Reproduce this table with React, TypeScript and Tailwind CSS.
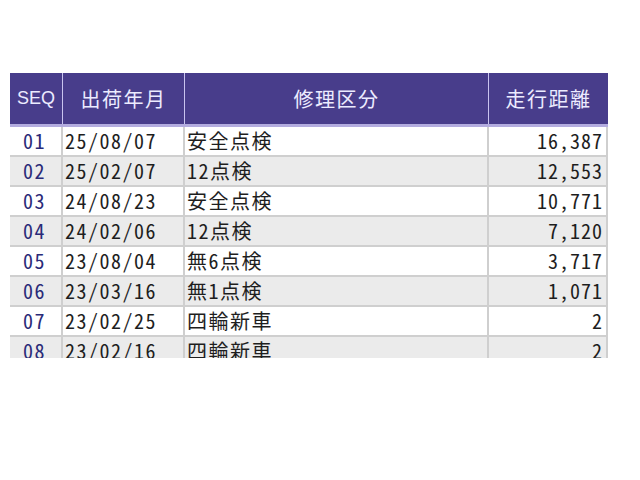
import React from 'react'

interface Row {
  seq: string
  date: string
  kind: string
  km: string
}

const rows: Row[] = [
  { seq: '01', date: '25/08/07', kind: '安全点検', km: '16,387' },
  { seq: '02', date: '25/02/07', kind: '12点検', km: '12,553' },
  { seq: '03', date: '24/08/23', kind: '安全点検', km: '10,771' },
  { seq: '04', date: '24/02/06', kind: '12点検', km: '7,120' },
  { seq: '05', date: '23/08/04', kind: '無6点検', km: '3,717' },
  { seq: '06', date: '23/03/16', kind: '無1点検', km: '1,071' },
  { seq: '07', date: '23/02/25', kind: '四輪新車', km: '2' },
  { seq: '08', date: '23/02/16', kind: '四輪新車', km: '2' },
]

const cols = 'grid grid-cols-[53px_122px_304px_119px]'
const font = 'font-["Noto_Sans_Mono_CJK_JP","Noto_Sans_CJK_JP",sans-serif]'

const App: React.FC = () => {
  return (
    <div className="w-[640px] h-[480px] bg-white pt-[73px] pl-[10px]">
      <div className={`w-[598px] h-[285px] overflow-hidden ${font}`}>
        {/* header */}
        <div className={`${cols} h-[54px] bg-[#483d8b] border-b-[3px] border-[#b3acdf] text-[#ecebff]`}>
          <div className="flex items-center justify-center border-r border-[#c9c4ef] font-['Liberation_Sans',sans-serif] text-[18px]">
            SEQ
          </div>
          <div className="flex items-center justify-center border-r border-[#c9c4ef] text-[20px] tracking-[1.5px]">
            出荷年月
          </div>
          <div className="flex items-center justify-center border-r border-[#c9c4ef] text-[20px] tracking-[1.5px]">
            修理区分
          </div>
          <div className="flex items-center justify-center text-[20px] tracking-[1.5px]">
            走行距離
          </div>
        </div>

        {/* rows */}
        {rows.map((r, i) => (
          <div
            key={r.seq}
            className={`${cols} h-[30px] border-b-2 border-[#cfcfcf] text-[20px] leading-none tracking-[1.5px] text-[#1e1e1e] ${i % 2 === 1 ? 'bg-[#ebebeb]' : 'bg-white'}`}
          >
            <div className="flex items-center pl-[13px] text-[#2a2a78] border-r-2 border-[#cfcfcf]">{r.seq}</div>
            <div className="flex items-center pl-[2px] border-r-2 border-[#cfcfcf]">{r.date}</div>
            <div className="flex items-center pl-[2px] border-r-2 border-[#cfcfcf]">{r.kind}</div>
            <div className="flex items-center justify-end pr-[3px] tracking-[1px] border-r-2 border-[#cfcfcf]">{r.km}</div>
          </div>
        ))}
      </div>
    </div>
  )
}

export default App
